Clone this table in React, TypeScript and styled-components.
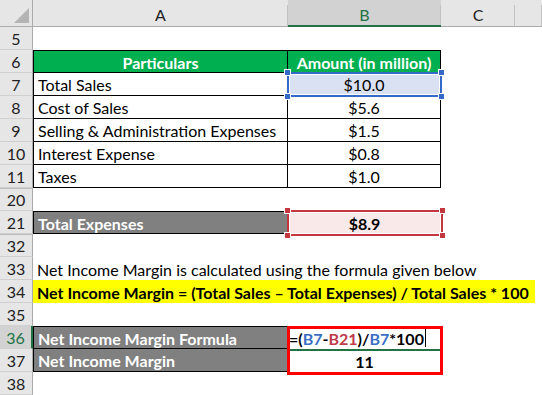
import React from "react";
import styled, { createGlobalStyle, css } from "styled-components";

const GlobalStyle = createGlobalStyle`
  html, body {
    margin: 0;
    padding: 0;
    background: #fff;
  }
  body {
    width: 542px;
    height: 395px;
    overflow: hidden;
    font-family: Lato, "Liberation Sans", sans-serif;
  }
`;

type Part = { text: string; color?: string };

type RowData = {
  num: string;
  active?: boolean;
  hiddenAbove?: boolean;
  cells: React.ReactNode;
};

const Sheet = styled.div`
  display: grid;
  grid-template-columns: 33px 255px 153px 74px 27px;
  grid-template-rows: 27px repeat(16, 23px);
  width: 542px;
  height: 395px;
  overflow: hidden;
  font-size: 16px;
  color: #000;
`;

const Corner = styled.div`
  background: #e6e6e6;
  border-right: 1px solid #ababab;
  border-bottom: 1px solid #ababab;
  box-sizing: border-box;
  display: flex;
  align-items: flex-end;
  justify-content: flex-end;
  padding: 0 3px 3px 0;
`;

const ColHead = styled.div<{ $selected?: boolean }>`
  box-sizing: border-box;
  display: flex;
  align-items: center;
  justify-content: center;
  padding-top: 3px;
  font-size: 16px;
  color: ${(p) => (p.$selected ? "#217346" : "#222")};
  background:
    linear-gradient(#c2c2c2, #c2c2c2) right 5px / 1px calc(100% - 5px) no-repeat,
    ${(p) => (p.$selected ? "#d2d2d2" : "#e6e6e6")};
  border-bottom: ${(p) => (p.$selected ? "2px solid #217346" : "1px solid #ababab")};
`;

const RowHead = styled.div<{ $active?: boolean; $hiddenAbove?: boolean }>`
  box-sizing: border-box;
  display: flex;
  align-items: center;
  justify-content: center;
  font-size: 16px;
  color: ${(p) => (p.$active ? "#217346" : "#222")};
  background: ${(p) => (p.$active ? "#d2d2d2" : "#e6e6e6")};
  border-bottom: 1px solid #cfcfcf;
  border-right: ${(p) => (p.$active ? "2px solid #217346" : "1px solid #ababab")};
  border-top: ${(p) => (p.$hiddenAbove ? "1px solid #bdbdbd" : "none")};
`;

const Cell = styled.div<{
  $fill?: string;
  $bold?: boolean;
  $color?: string;
  $center?: boolean;
  $boxed?: boolean;
  $top?: boolean;
  $left?: boolean;
  $span?: number;
  $trim?: number;
}>`
  position: relative;
  box-sizing: border-box;
  display: flex;
  align-items: center;
  justify-content: ${(p) => (p.$center ? "center" : "flex-start")};
  padding: 1px 4px 0;
  white-space: nowrap;
  background: ${(p) => p.$fill ?? "#fff"};
  color: ${(p) => p.$color ?? "#000"};
  font-weight: ${(p) => (p.$bold ? 700 : 400)};
  grid-column: ${(p) => (p.$span ? `span ${p.$span}` : "auto")};
  margin-right: ${(p) => p.$trim ?? 0}px;
  ${(p) =>
    p.$boxed &&
    css`
      border-right: 1px solid #000;
      border-bottom: 1px solid #000;
    `}
  ${(p) => p.$top && css`border-top: 1px solid #000;`}
  ${(p) => p.$left && css`border-left: 1px solid #000;`}
`;

const Selection = styled.div<{ $color: string; $fill: string }>`
  position: absolute;
  top: -1px;
  left: -1px;
  right: -2px;
  bottom: -2px;
  border: 2px solid ${(p) => p.$color};
  background: ${(p) => p.$fill};
  box-shadow: inset 0 0 0 1px #fff;
  z-index: 4;
`;

const Handle = styled.span<{ $color: string; $x: "left" | "right"; $y: "top" | "bottom" }>`
  position: absolute;
  width: 5px;
  height: 5px;
  background: ${(p) => p.$color};
  border: 1px solid #fff;
  ${(p) => p.$x}: -5px;
  ${(p) => p.$y}: -5px;
`;

const CellText = styled.span`
  position: relative;
  z-index: 5;
`;

const FormulaFrame = styled.div`
  position: absolute;
  top: 0;
  left: -1px;
  width: 156px;
  height: 49px;
  box-sizing: border-box;
  border: 3px solid #ff0000;
  z-index: 7;
  pointer-events: none;
`;

const EditLine = styled.div`
  position: absolute;
  left: 2px;
  right: 0;
  bottom: -2px;
  height: 2px;
  background: #217346;
  z-index: 6;
`;

const Caret = styled.span`
  display: inline-block;
  width: 1px;
  height: 18px;
  background: #000;
  margin-left: 1px;
`;

const Formula = styled.span`
  position: relative;
  left: -3px;
  font-weight: 700;
  display: flex;
  align-items: center;
  z-index: 5;
`;

const Ref = styled.span<{ $color?: string }>`
  color: ${(p) => p.$color ?? "#000"};
`;

const Picked = ({ color, fill, children }: { color: string; fill: string; children: React.ReactNode }) => (
  <>
    <Selection $color={color} $fill={fill}>
      <Handle $color={color} $x="left" $y="top" />
      <Handle $color={color} $x="right" $y="top" />
      <Handle $color={color} $x="left" $y="bottom" />
      <Handle $color={color} $x="right" $y="bottom" />
    </Selection>
    <CellText>{children}</CellText>
  </>
);

const formulaParts: Part[] = [
  { text: "=(" },
  { text: "B7", color: "#3a6fc6" },
  { text: "-" },
  { text: "B21", color: "#c0394b" },
  { text: ")/" },
  { text: "B7", color: "#3a6fc6" },
  { text: "*100" },
];

const Blank = () => (
  <>
    <Cell />
    <Cell />
    <Cell />
    <Cell />
  </>
);

const GREEN = "#00b050";
const GRAY = "#808080";

const tableRow = (label: string, value: string, extra?: React.ReactNode) => (
  <>
    <Cell $boxed $left>{label}</Cell>
    <Cell $boxed $center>{extra ?? value}</Cell>
    <Cell />
    <Cell />
  </>
);

const rows: RowData[] = [
  { num: "5", cells: <Blank /> },
  {
    num: "6",
    cells: (
      <>
        <Cell $boxed $left $top $fill={GREEN} $color="#fff" $bold $center>Particulars</Cell>
        <Cell $boxed $top $fill={GREEN} $color="#fff" $bold $center>Amount (in million)</Cell>
        <Cell />
        <Cell />
      </>
    ),
  },
  {
    num: "7",
    cells: tableRow("Total Sales", "$10.0", <Picked color="#3569c7" fill="#d9e1f2">$10.0</Picked>),
  },
  { num: "8", cells: tableRow("Cost of Sales", "$5.6") },
  { num: "9", cells: tableRow("Selling & Administration Expenses", "$1.5") },
  { num: "10", cells: tableRow("Interest Expense", "$0.8") },
  { num: "11", cells: tableRow("Taxes", "$1.0") },
  { num: "20", hiddenAbove: true, cells: <Blank /> },
  {
    num: "21",
    cells: (
      <>
        <Cell $boxed $left $top $fill={GRAY} $color="#fff" $bold>Total Expenses</Cell>
        <Cell $bold $center>
          <Picked color="#c4373f" fill="#f9e9e9">$8.9</Picked>
        </Cell>
        <Cell />
        <Cell />
      </>
    ),
  },
  { num: "32", hiddenAbove: true, cells: <Blank /> },
  {
    num: "33",
    cells: <Cell $span={4}>Net Income Margin is calculated using the formula given below</Cell>,
  },
  {
    num: "34",
    cells: (
      <Cell $span={4} $trim={7} $fill="#ffff00" $bold>
        Net Income Margin = (Total Sales – Total Expenses) / Total Sales * 100
      </Cell>
    ),
  },
  { num: "35", cells: <Blank /> },
  {
    num: "36",
    active: true,
    cells: (
      <>
        <Cell $boxed $left $top $fill={GRAY} $color="#fff" $bold>Net Income Margin Formula</Cell>
        <Cell>
          <FormulaFrame />
          <Formula>
            {formulaParts.map((p, i) => (
              <Ref key={i} $color={p.color}>{p.text}</Ref>
            ))}
            <Caret />
          </Formula>
          <EditLine />
        </Cell>
        <Cell />
        <Cell />
      </>
    ),
  },
  {
    num: "37",
    cells: (
      <>
        <Cell $boxed $left $fill={GRAY} $color="#fff" $bold>Net Income Margin</Cell>
        <Cell $bold $center>11</Cell>
        <Cell />
        <Cell />
      </>
    ),
  },
  { num: "38", cells: <Blank /> },
];

const App: React.FC = () => {
  return (
    <>
      <GlobalStyle />
      <Sheet>
        <Corner>
          <svg width="15" height="15" viewBox="0 0 15 15">
            <polygon points="15,0 15,15 0,15" fill="#b4b4b4" />
          </svg>
        </Corner>
        <ColHead>A</ColHead>
        <ColHead $selected>B</ColHead>
        <ColHead>C</ColHead>
        <ColHead />
        {rows.map((r) => (
          <React.Fragment key={r.num}>
            <RowHead $active={r.active} $hiddenAbove={r.hiddenAbove}>{r.num}</RowHead>
            {r.cells}
          </React.Fragment>
        ))}
      </Sheet>
    </>
  );
};

export default App;
